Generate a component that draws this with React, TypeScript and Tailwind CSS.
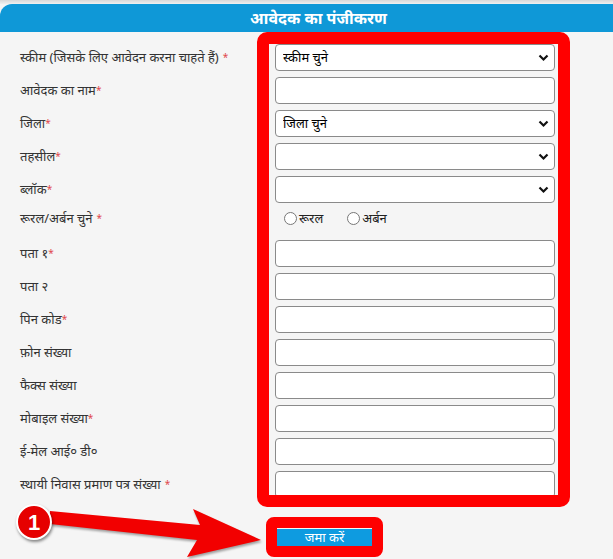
type Field =
  | { kind: 'select'; label: string; star?: string; placeholder?: string }
  | { kind: 'input'; label: string; star?: string }
  | { kind: 'radio'; label: string; star?: string };

// star: '' => asterisk right after text, ' ' => asterisk after a space
const fields: Field[] = [
  { kind: 'select', label: 'स्कीम (जिसके लिए आवेदन करना चाहते हैं)', star: ' ', placeholder: 'स्कीम चुने' },
  { kind: 'input', label: 'आवेदक का नाम', star: '' },
  { kind: 'select', label: 'जिला', star: '', placeholder: 'जिला चुने' },
  { kind: 'select', label: 'तहसील', star: '' },
  { kind: 'select', label: 'ब्लॉक', star: '' },
  { kind: 'radio', label: 'रूरल/अर्बन चुने', star: ' ' },
  { kind: 'input', label: 'पता १', star: '' },
  { kind: 'input', label: 'पता २' },
  { kind: 'input', label: 'पिन कोड', star: '' },
  { kind: 'input', label: 'फ़ोन संख्या' },
  { kind: 'input', label: 'फैक्स संख्या' },
  { kind: 'input', label: 'मोबाइल संख्या', star: '' },
  { kind: 'input', label: 'ई-मेल आई० डी०' },
  { kind: 'input', label: 'स्थायी निवास प्रमाण पत्र संख्या', star: ' ' },
];

const Chevron = () => (
  <svg
    className="pointer-events-none absolute right-[6px] top-1/2 -translate-y-1/2"
    width="11"
    height="8"
    viewBox="0 0 11 8"
  >
    <path d="M1.5 1.5 L5.5 5.5 L9.5 1.5" fill="none" stroke="#111" strokeWidth="2.2" />
  </svg>
);

const Label = ({ field }: { field: Field }) => (
  <div
    className={
      field.kind === 'radio'
        ? 'flex h-[19px] items-center pl-[20px] text-[13px] text-[#333]'
        : 'flex h-[27px] items-center pl-[20px] text-[13px] text-[#333]'
    }
  >
    <span className="whitespace-pre">{field.label}</span>
    {field.star !== undefined && (
      <span className={field.star === ' ' ? 'ml-[4px] text-[10px] text-[#e0474c]' : 'text-[10px] text-[#e0474c]'}>*</span>
    )}
  </div>
);

const FieldControl = ({ field }: { field: Field }) => {
  if (field.kind === 'select') {
    return (
      <div className="relative h-[27px] w-[280px]">
        <select
          defaultValue=""
          className="h-full w-full appearance-none rounded-[4px] border border-[#8a8a8a] bg-white pl-[7px] text-[13px] text-black outline-none"
        >
          <option value="">{field.placeholder ?? ''}</option>
        </select>
        <Chevron />
      </div>
    );
  }
  if (field.kind === 'radio') {
    return (
      <div className="flex h-[25px] items-start pl-[9px] pt-[3px] text-[13px] leading-[13px] text-[#222]">
        <label className="flex items-center gap-[2px]">
          <input type="radio" name="area" className="m-0 h-[13px] w-[13px]" />
          <span>रूरल</span>
        </label>
        <label className="ml-[24px] flex items-center gap-[2px]">
          <input type="radio" name="area" className="m-0 h-[13px] w-[13px]" />
          <span>अर्बन</span>
        </label>
      </div>
    );
  }
  return (
    <input
      type="text"
      className="h-[27px] w-[280px] rounded-[4px] border border-[#8a8a8a] bg-white px-[7px] text-[13px] outline-none"
    />
  );
};

export default function App() {
  return (
    <div
      className="relative h-[559px] w-[613px] overflow-hidden bg-[#f5f5f5]"
      style={{ fontFamily: '"Noto Sans", "Liberation Sans", sans-serif' }}
    >
      {/* top shade + header */}
      <div className="h-[4px] bg-gradient-to-b from-[#d8d8d8] to-[#f0f0f0]" />
      <div className="flex h-[28px] items-center justify-center rounded-tl-[12px] bg-[#0f98d7] pl-[24px] text-[16px] font-bold text-white">
        आवेदक का पंजीकरण
      </div>

      {/* form */}
      <div className="grid grid-cols-[275px_280px] items-start gap-y-[6px] pt-[12px]">
        {fields.map((f) => (
          <div key={f.label} className="contents">
            <Label field={f} />
            <FieldControl field={f} />
          </div>
        ))}
      </div>

      <div className="mt-[31px] flex pl-[277px]">
        <button className="flex h-[17px] w-[95px] items-center justify-center bg-[#0e9be0] text-[13px] leading-none text-white">
          जमा करें
        </button>
      </div>

      {/* annotations */}
      <div className="pointer-events-none absolute left-[257px] top-[32px] h-[475px] w-[313px] rounded-[10px] border-[12px] border-[#ff0000]" />
      <div className="pointer-events-none absolute left-[266px] top-[517px] h-[40px] w-[117px] rounded-[8px] border-[11px] border-[#ff0000]" />

      <svg
        className="pointer-events-none absolute left-0 top-0"
        width="613"
        height="559"
        viewBox="0 0 613 559"
        style={{ filter: 'drop-shadow(1px 2px 1px rgba(0,0,0,0.35))' }}
      >
        <polygon
          points="50,511 200,525 193,509 261,540 187,557 197,540 50,524"
          fill="#f20000"
        />
      </svg>

      <div className="absolute left-[16px] top-[504px] flex h-[36px] w-[36px] items-center justify-center rounded-full border-[2px] border-white bg-[#e60000] text-[22px] font-bold text-white shadow-[1px_2px_3px_rgba(0,0,0,0.45)]">
        <span style={{ fontFamily: '"Liberation Sans", Arial, sans-serif' }}>1</span>
      </div>
    </div>
  );
}
